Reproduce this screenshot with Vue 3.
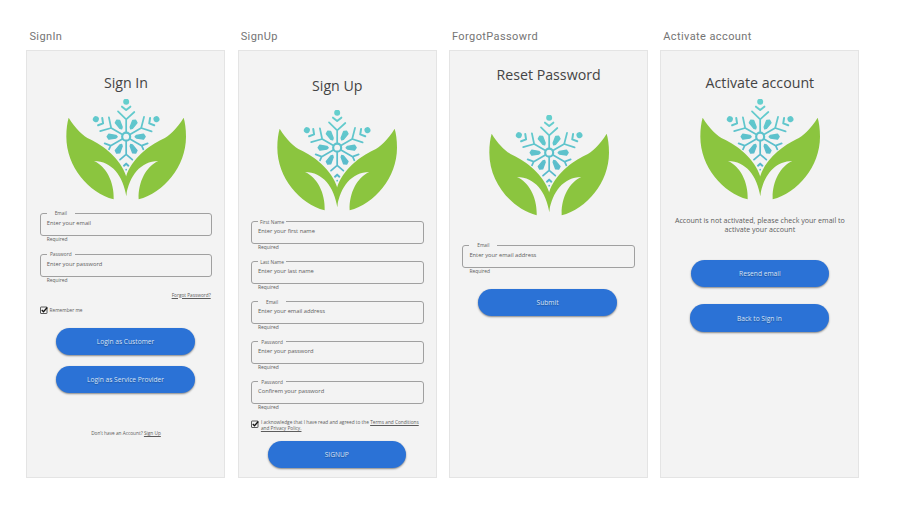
<script setup>
const petals = [30, 90, 150, 210, 270, 330]

const signInFields = [
  { label: 'Email', placeholder: 'Enter your email' },
  { label: 'Password', placeholder: 'Enter your password' }
]
const signUpFields = [
  { label: 'First Name', placeholder: 'Enter your first name' },
  { label: 'Last Name', placeholder: 'Enter your last name' },
  { label: 'Email', placeholder: 'Enter your email address' },
  { label: 'Password', placeholder: 'Enter your password' },
  { label: 'Password', placeholder: 'Confirem your password' }
]
</script>

<template>
  <svg class="defs" aria-hidden="true">
    <defs>
      <linearGradient id="ice" gradientUnits="userSpaceOnUse" x1="318" y1="236" x2="318" y2="455">
        <stop offset="0" stop-color="#66d0cd" />
        <stop offset="1" stop-color="#55b4cb" />
      </linearGradient>
      <mask id="flake" maskUnits="userSpaceOnUse" x="138" y="230" width="360" height="310">
        <g fill="#fff" stroke="#fff" stroke-linecap="round" stroke-linejoin="round">
          <circle cx="318.5" cy="349" r="12" fill="none" stroke-width="6.5" />
          <g v-for="a in [0, 60, 300]" :key="'t' + a" :transform="`rotate(${a} 318.5 349)`">
            <circle cx="318.5" cy="244" r="9" stroke="none" />
            <path d="M306 259L318.5 269L331 259" fill="none" stroke-width="6" />
            <path d="M318.5 336V297M294 273L318.5 297L343 275" fill="none" stroke-width="5.2" />
          </g>
          <path d="M307 356L272 376M254 369L272 376L267 387M330 356L365 376M383 369L365 376L370 387" fill="none" stroke-width="5.2" />
          <path d="M318.5 362V402M300 418L318.5 402L337 418" fill="none" stroke-width="5.2" />
          <path d="M312 436L318.5 430L325 436" fill="none" stroke-width="6" />
          <circle cx="318.5" cy="448" r="2.5" stroke="none" />
          <path
            v-for="p in petals"
            :key="'p' + p"
            :transform="`rotate(${p} 318.5 349)`"
            d="M318.5 322L314.5 318L311 297L318.5 292L326 297L322.5 318Z"
            stroke-width="4"
          />
        </g>
      </mask>
      <symbol id="logo" viewBox="138 236 360 303">
        <rect x="138" y="236" width="360" height="303" fill="url(#ice)" mask="url(#flake)" />
        <g fill="#8bc53f">
          <path d="M146 292C166 325 190 347 210 357C250 376 302 415 319 469V528C309 466 276 423 222 422C258 438 283 484 281 537C206 517 139 439 139 349C139 325 142 306 146 292Z" />
          <path transform="translate(637 0) scale(-1 1)" d="M146 292C166 325 190 347 210 357C250 376 302 415 319 469V528C309 466 276 423 222 422C258 438 283 484 281 537C206 517 139 439 139 349C139 325 142 306 146 292Z" />
        </g>
      </symbol>
      <symbol id="check" viewBox="0 0 16 16">
        <rect x="1" y="2" width="13" height="13" rx="1" fill="none" stroke="#333" stroke-width="1.6" />
        <path d="M3.5 8L7 11.5L14.5 3" fill="none" stroke="#111" stroke-width="2.6" />
      </symbol>
    </defs>
  </svg>

  <main class="board">
    <section class="frame">
      <h2 class="name">SignIn</h2>
      <div class="card sign-in">
        <h1 class="title">Sign In</h1>
        <svg class="logo"><use href="#logo" /></svg>
        <div class="fields">
          <div v-for="f in signInFields" :key="f.label" class="field">
            <div class="box"><span class="label">{{ f.label }}</span>{{ f.placeholder }}</div>
            <p class="hint">Required</p>
          </div>
        </div>
        <a class="forgot">Forgot Password?</a>
        <div class="tick"><svg class="check"><use href="#check" /></svg><span>Remember me</span></div>
        <button class="btn">Login as Customer</button>
        <button class="btn">Login as Service Provider</button>
        <p class="footer">Don’t have an Account? <u>Sign Up</u></p>
      </div>
    </section>

    <section class="frame">
      <h2 class="name">SignUp</h2>
      <div class="card sign-up">
        <h1 class="title">Sign Up</h1>
        <svg class="logo"><use href="#logo" /></svg>
        <div class="fields">
          <div v-for="(f, i) in signUpFields" :key="i" class="field">
            <div class="box"><span class="label">{{ f.label }}</span>{{ f.placeholder }}</div>
            <p class="hint">Required</p>
          </div>
        </div>
        <div class="tick">
          <svg class="check"><use href="#check" /></svg>
          <span>I acknowledge that I have read and agreed to the <u>Terms and Conditions</u><br /><u>and Privacy Policy.</u></span>
        </div>
        <button class="btn">SIGNUP</button>
      </div>
    </section>

    <section class="frame">
      <h2 class="name">ForgotPassowrd</h2>
      <div class="card reset">
        <h1 class="title">Reset Password</h1>
        <svg class="logo"><use href="#logo" /></svg>
        <div class="fields">
          <div class="field">
            <div class="box"><span class="label">Email</span>Enter your email address</div>
            <p class="hint">Required</p>
          </div>
        </div>
        <button class="btn">Submit</button>
      </div>
    </section>

    <section class="frame">
      <h2 class="name">Activate account</h2>
      <div class="card activate">
        <h1 class="title">Activate account</h1>
        <svg class="logo"><use href="#logo" /></svg>
        <p class="message">Account is not activated, please check your email to<br />activate your account</p>
        <button class="btn">Resend email</button>
        <button class="btn">Back to Sign in</button>
      </div>
    </section>
  </main>
</template>

<style>
body {
  margin: 0;
  background: #fff;
}
</style>

<style scoped>
* {
  box-sizing: border-box;
  margin: 0;
}
.defs {
  display: block;
  width: 0;
  height: 0;
}
.board {
  display: flex;
  gap: 12.3px;
  padding: 28px 0 0 26.4px;
  font-family: 'Open Sans', 'Noto Sans', sans-serif;
  color: #5c5c5c;
}
.frame {
  flex: none;
  width: 199px;
}
.name {
  height: 22px;
  padding-left: 3px;
  font: 400 11px/17px Roboto, sans-serif;
  letter-spacing: 0.4px;
  color: #747474;
  white-space: nowrap;
}
.card {
  display: flex;
  flex-direction: column;
  height: 428px;
  padding: 0 12.2px 0 12.4px;
  border: 1px solid #e4e4e4;
  background: #f3f3f3;
}
.title {
  height: 20px;
  font-size: 14.2px;
  line-height: 20px;
  font-weight: 400;
  text-align: center;
  color: #444;
  white-space: nowrap;
}
.logo {
  flex: none;
  align-self: center;
  width: 120px;
  height: 101px;
}
.fields {
  display: flex;
  flex-direction: column;
}
.field {
  height: 40px;
}
.box {
  position: relative;
  height: 23px;
  padding: 5px 0 0 6px;
  border: 1px solid #a0a0a0;
  border-radius: 3px;
  font-size: 5.75px;
  line-height: 8px;
  color: #606060;
}
.label {
  position: absolute;
  top: -4px;
  left: 6px;
  width: 28px;
  background: #f3f3f3;
  font-size: 4.8px;
  line-height: 7px;
  text-align: center;
  white-space: nowrap;
}
.hint {
  margin-top: -1px;
  padding-left: 7px;
  font-size: 4.9px;
  line-height: 8px;
}
.forgot {
  align-self: flex-end;
  margin-right: 1.5px;
  font-size: 4.75px;
  line-height: 8px;
  text-decoration: underline;
}
.tick {
  display: flex;
  gap: 1.8px;
  font-size: 4.75px;
  line-height: 6px;
  white-space: nowrap;
}
.check {
  flex: none;
  width: 8px;
  height: 8px;
}
.btn {
  flex: none;
  align-self: center;
  width: 138.5px;
  height: 27.3px;
  margin-right: 1px;
  padding: 0;
  border: 0;
  border-radius: 14px;
  background: #2b72d6;
  box-shadow: 0 1px 2px rgba(0, 0, 0, 0.45);
  font: 400 6.65px/27px 'Open Sans', sans-serif;
  color: #d8e5f8;
  text-shadow: 0 1px 1px rgba(0, 0, 0, 0.3);
}
.footer {
  font-size: 4.75px;
  line-height: 8px;
  text-align: center;
}
.message {
  font-size: 7.1px;
  line-height: 9px;
  text-align: center;
  white-space: nowrap;
}

.sign-in .title { margin-top: 22px; }
.sign-in .logo { margin-top: 5.7px; }
.sign-in .fields { margin-top: 13.3px; }
.sign-in .field { height: 41.3px; }
.sign-in .forgot { margin-top: -5px; }
.sign-in .tick { margin-top: 7px; align-items: center; }
.sign-in .btn { margin-top: 14px; }
.sign-in .btn + .btn { margin-top: 11px; }
.sign-in .footer { margin-top: 36px; }

.sign-up .title { margin-top: 25px; }
.sign-up .logo { margin-top: 13.7px; }
.sign-up .fields { margin-top: 10.8px; }
.sign-up .label { top: -3px; }
.sign-up .tick { margin-top: -2px; }
.sign-up .check { margin-top: 1px; }
.sign-up .btn { margin-top: 9.5px; }

.reset .title { margin-top: 14px; }
.reset .logo { margin-top: 30px; }
.reset .fields { margin-top: 28.7px; }
.reset .hint { margin-top: -1px; }
.reset .btn { margin-top: 4.5px; margin-right: 2px; }

.activate .title { margin-top: 22px; }
.activate .logo { margin-top: 5.7px; }
.activate .message { margin-top: 16px; }
.activate .btn { margin-top: 26px; margin-right: 0; }
.activate .btn + .btn { margin-top: 17.4px; margin-right: 1px; }
</style>
